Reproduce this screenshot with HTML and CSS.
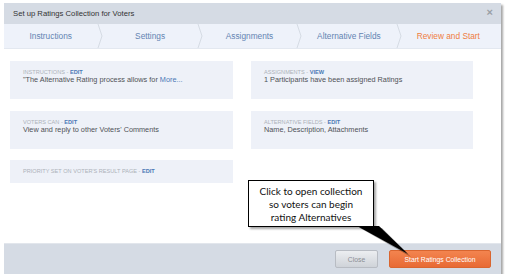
FILE: index.html
```html
<!DOCTYPE html>
<html lang="en">
  <head>
    <meta charset="UTF-8" />
    <meta name="viewport" content="width=device-width, initial-scale=1.0" />
    <title>Set up Ratings Collection for Voters</title>
    <link rel="stylesheet" href="styles.css">
  </head>
  <body>
    <div class="dialog">
      <div class="dialog-header">
        <span class="dialog-title">Set up Ratings Collection for Voters</span>
        <span class="dialog-close">&times;</span>
      </div>
      <div class="tabs">
        <div class="tab">Instructions<svg class="chevron" width="6" height="24" viewBox="0 0 6 24"><polyline points="1,0 5,12 1,24" /></svg></div>
        <div class="tab">Settings<svg class="chevron" width="6" height="24" viewBox="0 0 6 24"><polyline points="1,0 5,12 1,24" /></svg></div>
        <div class="tab">Assignments<svg class="chevron" width="6" height="24" viewBox="0 0 6 24"><polyline points="1,0 5,12 1,24" /></svg></div>
        <div class="tab">Alternative Fields<svg class="chevron" width="6" height="24" viewBox="0 0 6 24"><polyline points="1,0 5,12 1,24" /></svg></div>
        <div class="tab active">Review and Start</div>
      </div>
      <div class="dialog-body">
        <div class="card">
          <div class="card-label">Instructions - <a>Edit</a></div>
          <div class="card-value">"The Alternative Rating process allows for <a>More...</a></div>
        </div>
        <div class="card">
          <div class="card-label">Assignments - <a>View</a></div>
          <div class="card-value">1 Participants have been assigned Ratings</div>
        </div>
        <div class="card">
          <div class="card-label">Voters can - <a>Edit</a></div>
          <div class="card-value">View and reply to other Voters' Comments</div>
        </div>
        <div class="card">
          <div class="card-label">Alternative fields - <a>Edit</a></div>
          <div class="card-value">Name, Description, Attachments</div>
        </div>
        <div class="card card-small">
          <div class="card-label">Priority set on voter's result page - <a>Edit</a></div>
        </div>
      </div>
      <div class="dialog-footer">
        <button class="btn btn-close">Close</button>
        <button class="btn btn-start">Start Ratings Collection</button>
      </div>
    </div>

    <div class="callout">
      Click to open collection<br />
      so voters can begin<br />
      rating Alternatives
    </div>
    <svg class="callout-pointer" width="70" height="40" viewBox="0 0 70 40">
      <polygon class="pointer-shadow" points="3,2 25,2 54,31" />
      <polygon class="pointer" points="0,0 22,0 51,28" />
    </svg>
  </body>
</html>
```

FILE: styles.css
```css
body {
  margin: 0;
  background: white;
  font-family: "Liberation Sans", Arial, sans-serif;
}
.dialog {
  margin: 3px 0 0 4px;
  width: 497px;
  background: white;
  box-shadow: 2px 2px 2px rgba(0, 0, 0, 0.35);
}
.dialog-header {
  height: 21px;
  background: #d5dbe4;
  display: flex;
  justify-content: space-between;
  align-items: center;
  padding: 0 8px 0 9px;
}
.dialog-title {
  font-size: 7.7px;
  color: #333;
}
.dialog-close {
  font-size: 11px;
  color: #9a9fa6;
  font-weight: bold;
  margin-top: -4px;
}
.tabs {
  display: flex;
  height: 24px;
  background: #eef2fa;
  border-bottom: 1px solid #e3e8f0;
}
.tab {
  flex: 1;
  position: relative;
  display: flex;
  align-items: center;
  justify-content: center;
  padding-right: 6px;
  font-size: 8.3px;
  color: #6384b2;
}
.tab.active {
  color: #ee7d3f;
}
.chevron {
  position: absolute;
  right: 0;
  top: 0;
}
.chevron polyline {
  fill: none;
  stroke: #d6dbe4;
  stroke-width: 1;
}
.dialog-body {
  height: 182px;
  padding: 12px 0 0 6px;
  display: grid;
  grid-template-columns: 223px 222px;
  grid-auto-rows: min-content;
  column-gap: 18px;
  row-gap: 12px;
}
.card {
  height: 38px;
  box-sizing: border-box;
  background: #eef1f8;
  padding: 8px 13px 0;
}
.card-small {
  height: 23px;
  margin-top: -1px;
}
.card-label {
  font-size: 5.6px;
  text-transform: uppercase;
  color: #adb1b9;
  line-height: 6px;
}
.card-label a,
.card-value a {
  color: #4b78b6;
  font-weight: bold;
}
.card-value {
  font-size: 7.3px;
  color: #4f5257;
  line-height: 9px;
}
.card-value a {
  font-weight: normal;
}
.dialog-footer {
  height: 31px;
  background: #d5dbe4;
  border-top: 1px solid #e2e6ec;
  box-sizing: border-box;
  display: flex;
  justify-content: flex-end;
  align-items: center;
  gap: 11px;
  padding-right: 10px;
}
.btn {
  font-family: "Liberation Sans", Arial, sans-serif;
  font-size: 6.8px;
  height: 18px;
  border-radius: 2px;
  padding: 0;
}
.btn-close {
  width: 43px;
  color: #8a8e94;
  background: linear-gradient(#eceef1, #cfd3d9);
  border: 1px solid #b8bcc3;
}
.btn-start {
  width: 102px;
  color: #fff;
  background: linear-gradient(#f3844f, #e86a34);
  border: 1px solid #d9652f;
}
.callout {
  position: absolute;
  left: 248px;
  top: 180px;
  width: 126px;
  height: 47px;
  background: white;
  border: 1px solid #000;
  box-shadow: 2px 2px 2px rgba(0, 0, 0, 0.35);
  font-family: Lato, "Liberation Sans", sans-serif;
  font-size: 10px;
  line-height: 13px;
  text-align: center;
  padding-top: 4px;
  box-sizing: border-box;
  color: #111;
}
.callout-pointer {
  position: absolute;
  left: 357px;
  top: 226px;
}
.pointer {
  fill: #000;
}
.pointer-shadow {
  fill: rgba(0, 0, 0, 0.3);
}
```
